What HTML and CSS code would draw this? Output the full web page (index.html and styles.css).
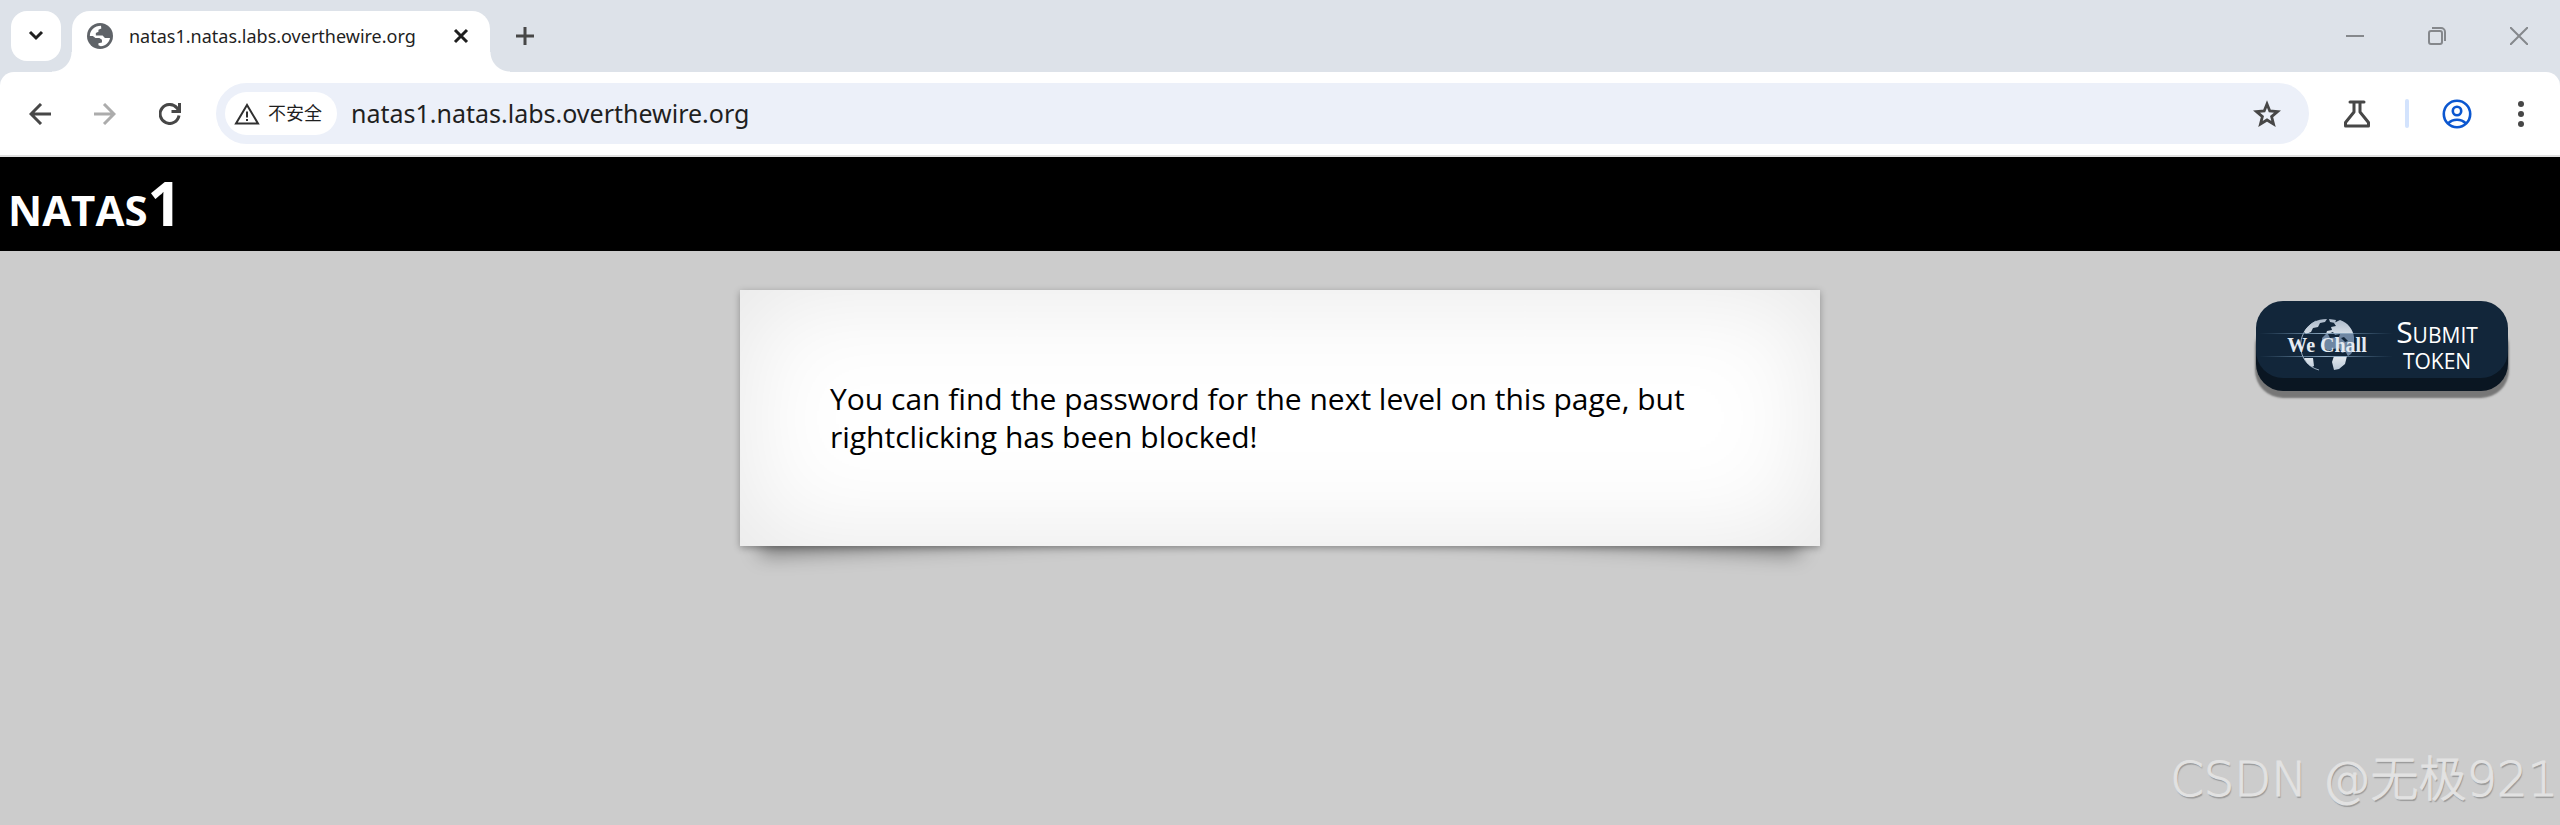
FILE: index.html
```html
<!DOCTYPE html>
<html lang="zh-CN">
<head>
    <meta charset="UTF-8">
    <meta name="viewport" content="width=device-width, initial-scale=1.0">
    <title>natas1.natas.labs.overthewire.org</title>
    <link rel="stylesheet" href="styles.css">
</head>
<body>
    <header class="browser">
        <div class="tab-strip">
            <button class="tab-search" type="button" aria-label="Search tabs">
                <svg width="16" height="12" viewBox="0 0 16 12" fill="none" stroke="#1f1f1f" stroke-width="3"><path d="M2 2l6 6 6-6"/></svg>
            </button>
            <div class="tab">
                <svg class="tab-icon" width="26" height="26" viewBox="2 2 20 20"><circle cx="12" cy="12" r="10" fill="#5f6368"/><path fill="#fff" d="M4.200 12C4.200 7.700 7.800 4.200 12.800 4.200L13 6.200 10.800 7.200V8.800L8.800 9.600V11.600H14L15.800 13.500H19.700C19 17 16.200 19.600 12.600 19.800L10.800 19.200V17.600L13.500 17V14.800L11.500 13.500H8.500L6.500 12z"/></svg>
                <span class="tab-title">natas1.natas.labs.overthewire.org</span>
                <button class="tab-close" type="button" aria-label="Close tab">
                    <svg width="16" height="16" viewBox="0 0 16 16" fill="none" stroke="#1f1f1f" stroke-width="3"><path d="M2 2l12 12M14 2L2 14"/></svg>
                </button>
            </div>
            <button class="new-tab" type="button" aria-label="New tab">
                <svg width="18" height="18" viewBox="0 0 18 18" fill="none" stroke="#474747" stroke-width="3"><path d="M9 0v18M0 9h18"/></svg>
            </button>
            <div class="window-controls">
                <button type="button" aria-label="Minimize">
                    <svg width="18" height="18" viewBox="0 0 18 18" fill="none" stroke="#85888c" stroke-width="2"><path d="M0 9h18"/></svg>
                </button>
                <button type="button" aria-label="Restore">
                    <svg width="18" height="18" viewBox="0 0 18 18" fill="none" stroke="#85888c" stroke-width="2"><rect x="1" y="4" width="13" height="13" rx="2"/><path d="M4 1h9a4 4 0 0 1 4 4v9"/></svg>
                </button>
                <button type="button" aria-label="Close">
                    <svg width="18" height="18" viewBox="0 0 18 18" fill="none" stroke="#85888c" stroke-width="2"><path d="M0 0l18 18M18 0L0 18"/></svg>
                </button>
            </div>
        </div>
        <div class="toolbar">
            <div class="nav-buttons">
                <button type="button" aria-label="Back">
                    <svg width="22" height="22" viewBox="0 0 22 22" fill="none" stroke="#474747" stroke-width="3"><path d="M22 11H2M12 1L2 11l10 10"/></svg>
                </button>
                <button type="button" aria-label="Forward" disabled>
                    <svg width="22" height="22" viewBox="0 0 22 22" fill="none" stroke="#acacac" stroke-width="3"><path d="M0 11h20M10 1l10 10-10 10"/></svg>
                </button>
                <button type="button" aria-label="Reload">
                    <svg width="22" height="22" viewBox="0 0 22 22" fill="none" stroke="#474747" stroke-width="3"><path d="M20 12.500a9.500 9.500 0 1 1-2-7.500l1.500 2"/><path d="M20.500 0v8.500h-8"/></svg>
                </button>
            </div>
            <div class="address-bar">
                <button class="site-info" type="button">
                    <svg width="26" height="22" viewBox="0 0 26 22" fill="none" stroke="#303030" stroke-width="2"><path d="M13 2L2 20.500h22z"/><path d="M13 8.500v6M13 16v2"/></svg>
                    <span>不安全</span>
                </button>
                <input class="url" type="text" value="natas1.natas.labs.overthewire.org" aria-label="Address">
                <button class="bookmark" type="button" aria-label="Bookmark this page">
                    <svg width="28" height="27" viewBox="0 0 28 27" fill="none" stroke="#474747" stroke-width="2.800"><path d="M14 4l2.800 7 7.700.600-5.900 5 1.900 7.400L14 20l-6.500 4 1.900-7.400-5.900-5 7.700-.600z"/></svg>
                </button>
            </div>
            <div class="toolbar-actions">
                <button type="button" aria-label="Labs">
                    <svg width="28" height="28" viewBox="0 0 28 28" fill="none" stroke="#474747" stroke-width="3" stroke-linejoin="round"><path d="M7 2h14" stroke-linecap="round"/><path d="M11 2v10L2.500 22.500V26h23v-3.500L17 12V2"/></svg>
                </button>
                <span class="divider"></span>
                <button type="button" aria-label="Profile">
                    <svg width="30" height="30" viewBox="0 0 30 30" fill="none" stroke="#0b57d0" stroke-width="2.600"><circle cx="15" cy="15" r="13.200"/><circle cx="15" cy="12" r="4.200"/><path d="M6 24.500c5-5 13-5 18 0"/></svg>
                </button>
                <button type="button" aria-label="Menu">
                    <svg width="6" height="26" viewBox="0 0 6 26" fill="#474747"><circle cx="3" cy="3" r="3"/><circle cx="3" cy="13" r="3"/><circle cx="3" cy="23" r="3"/></svg>
                </button>
            </div>
        </div>
    </header>

    <main class="page">
        <h1>natas1</h1>
        <div class="content">You can find the password for the next level on this page, but rightclicking has been blocked!</div>
        <button class="wechall" type="button">
            <svg class="wechall-logo" width="140" height="54" viewBox="0 0 140 54">
                <defs>
                    <linearGradient id="beam">
                        <stop offset="0" stop-color="#5f87a8" stop-opacity="0"/>
                        <stop offset=".5" stop-color="#8fabc2"/>
                        <stop offset="1" stop-color="#5f87a8" stop-opacity="0"/>
                    </linearGradient>
                    <linearGradient id="land" x1="0" y1="0" x2="0" y2="54" gradientUnits="userSpaceOnUse">
                        <stop offset="0" stop-color="#a9b7c8"/>
                        <stop offset=".28" stop-color="#d3dce5"/>
                        <stop offset=".3" stop-color="#6f87a3"/>
                        <stop offset=".7" stop-color="#6f87a3"/>
                        <stop offset=".72" stop-color="#e2e8ee"/>
                        <stop offset="1" stop-color="#b4c3d3"/>
                    </linearGradient>
                </defs>
                <path fill="none" stroke="#9badbf" d="M63 52C40 46 38 14 60 3"/>
                <path fill="url(#land)" d="M48 14C53 5 61 1 71 1l-2 3-5 1-2 4-5 1-2 4-5 2zM73 1l7 1-1 3-5-1zM80 4l4-2c8 3 13 9 14 17v12l-3 5-3 2-3-4-3 1-3-5-6 1-5 2-6-5v-8l4-4 1-3 5-1-1-3 5-1-2-3 4-2zM78 38h13l-2 8-6 5-5 1-2-8zM48 40h9l1 8-2 1c-4-2-6-5-8-9z"/>
                <path fill="#12263a" d="M72 16l5-2 2 3 5-1-1 3-9 1zM85 20l3-1 4 4-3 1zM86 36l4-2 1 3-4 1z"/>
                <rect x="3" y="15" width="134" height="1" fill="url(#beam)"/>
                <rect x="3" y="38" width="134" height="1" fill="url(#beam)"/>
                <text class="wechall-name" x="71" y="34" text-anchor="middle">We Chall</text>
            </svg>
            <span class="wechall-label">Submit token</span>
        </button>
        <div class="watermark">CSDN @无极921</div>
    </main>
</body>
</html>
```
FILE: styles.css
```css
:root {
    --strip: #dde2e9;
    --omnibox: #ecf0f9;
    --text: #1f1f1f;
    --page: #cccccc;
    --navy: #12263a;
}

* {
    box-sizing: border-box;
}

body {
    margin: 0;
    min-height: 100vh;
    display: flex;
    flex-direction: column;
    font-family: "Noto Sans", "Noto Sans CJK SC", sans-serif;
    color: var(--text);
    background-color: var(--page);
}

button {
    display: flex;
    align-items: center;
    justify-content: center;
    padding: 0;
    border: none;
    background: none;
    font-family: inherit;
    color: inherit;
}

.browser {
    background-color: var(--strip);
    border-bottom: 2px solid #e0e0e0;
}

/* tab strip */
.tab-strip {
    display: flex;
    align-items: center;
    height: 72px;
    padding-left: 11px;
}

.tab-search {
    width: 50px;
    height: 50px;
    border-radius: 16px;
    background-color: #fff;
}

.tab {
    position: relative;
    align-self: flex-end;
    display: flex;
    align-items: center;
    width: 418px;
    height: 61px;
    margin-left: 11px;
    padding: 0 21px 12px 15px;
    border-radius: 18px 18px 0 0;
    background-color: #fff;
}

.tab::before,
.tab::after {
    content: "";
    position: absolute;
    bottom: 0;
    width: 20px;
    height: 20px;
}

.tab::before {
    right: 100%;
    background: radial-gradient(circle at 0 0, transparent 19px, #fff 20px);
}

.tab::after {
    left: 100%;
    background: radial-gradient(circle at 100% 0, transparent 19px, #fff 20px);
}

.tab-title {
    flex: 1;
    margin-left: 16px;
    font-size: 18px;
    white-space: nowrap;
}

.new-tab {
    width: 50px;
    height: 50px;
    margin-left: 10px;
}

.window-controls {
    display: flex;
    margin-left: auto;
}

.window-controls button {
    width: 82px;
    height: 72px;
}

/* toolbar */
.toolbar {
    display: flex;
    align-items: center;
    height: 83px;
    padding: 0 7px;
    border-radius: 14px 14px 0 0;
    background-color: #fff;
}

.nav-buttons {
    display: flex;
    width: 209px;
}

.nav-buttons button {
    width: 65px;
    height: 60px;
}

.address-bar {
    flex: 1;
    display: flex;
    align-items: center;
    height: 61px;
    padding: 0 28px 0 9px;
    border-radius: 31px;
    background-color: var(--omnibox);
}

.site-info {
    justify-content: flex-start;
    gap: 8px;
    width: 112px;
    height: 43px;
    padding-left: 9px;
    border-radius: 22px;
    background-color: #fff;
    font-size: 18px;
    line-height: 43px;
}

.url {
    flex: 1;
    margin-left: 14px;
    padding: 0 0 2px;
    border: none;
    outline: none;
    background: transparent;
    font-family: inherit;
    font-size: 25px;
    color: var(--text);
}

.toolbar-actions {
    display: flex;
    align-items: center;
    margin-left: 16px;
}

.toolbar-actions button {
    width: 64px;
    height: 60px;
}

.divider {
    width: 4px;
    height: 29px;
    margin: 0 16px;
    border-radius: 2px;
    background-color: #d3e3fd;
}

/* level page */
.page {
    position: relative;
    z-index: 0;
    flex: 1;
    background-color: var(--page);
    font-family: "Open Sans", "Noto Sans CJK SC", sans-serif;
}

h1 {
    height: 94px;
    margin: 0;
    padding-left: 8px;
    background-color: #000;
    color: #fff;
    font-size: 60px;
    line-height: 92px;
    font-variant: small-caps;
}

.content {
    position: relative;
    width: 1080px;
    margin: 39px auto 0;
    padding: 90px;
    background-color: #fff;
    box-shadow: 0 2px 7px rgba(0, 0, 0, 0.3), 0 0 108px rgba(0, 0, 0, 0.1) inset;
    color: #000;
    font-size: 30px;
    line-height: 38px;
}

/* lifted paper corners */
.content::before,
.content::after {
    content: "";
    position: absolute;
    z-index: -1;
    bottom: 27px;
    left: 18px;
    width: 50%;
    height: 20%;
    box-shadow: 0 22px 20px rgba(0, 0, 0, 0.4);
    transform: rotate(-3deg);
}

.content::after {
    left: auto;
    right: 18px;
    transform: rotate(3deg);
}

.wechall {
    position: absolute;
    top: 144px;
    right: 52px;
    width: 252px;
    height: 77px;
    padding-top: 10px;
    border-radius: 27px;
    background-color: var(--navy);
    box-shadow: 0 13px 0 #0a1622, 0 19px 2px 1px #777;
    color: #fff;
}

.wechall-name {
    fill: #e4ebf2;
    font-family: "Liberation Serif", serif;
    font-size: 20px;
    font-weight: bold;
}

.wechall-label {
    flex: 1;
    padding-right: 30px;
    font-size: 30px;
    line-height: 26px;
    font-variant: small-caps;
}

.watermark {
    position: absolute;
    right: 2px;
    bottom: 15px;
    color: #e2e2e2;
    font-family: "DejaVu Sans Light", "DejaVu Sans", "Noto Sans CJK SC", sans-serif;
    font-weight: 200;
    font-size: 48px;
    -webkit-text-stroke: 1px #e2e2e2;
    text-shadow: 1px 2px 1px #999;
}
```
